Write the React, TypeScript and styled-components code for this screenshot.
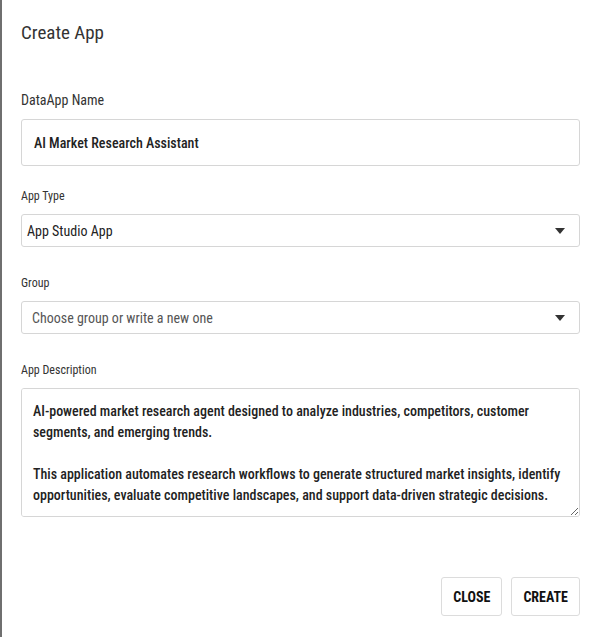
import styled, { createGlobalStyle } from "styled-components";

const GlobalStyle = createGlobalStyle`
  html, body {
    margin: 0;
    padding: 0;
    background: #ffffff;
  }
  * {
    box-sizing: border-box;
  }
`

const Dialog = styled.div`
  width: 600px;
  height: 637px;
  background: #ffffff;
  border-left: 2px solid #6f6f6f;
  padding: 0 20px 0 19px;
  display: flex;
  flex-direction: column;
  font-family: "Roboto Condensed", Roboto, "Liberation Sans", sans-serif;
  color: #2b2b2b;
`

const Title = styled.h2`
  margin: 21px 0 0;
  font-size: 19px;
  line-height: 24px;
  font-weight: 400;
  color: #333;
`

const Form = styled.div`
  display: flex;
  flex-direction: column;
`

const Field = styled.div<{ $top: number }>`
  display: flex;
  flex-direction: column;
  margin-top: ${({ $top }) => $top}px;
`

const Label = styled.label<{ $big?: boolean }>`
  font-size: ${({ $big }) => ($big ? 14 : 12)}px;
  line-height: ${({ $big }) => ($big ? 18 : 14)}px;
  margin-bottom: ${({ $big }) => ($big ? 10 : 11)}px;
  color: #333;
`

const TextBox = styled.div`
  height: 47px;
  border: 1px solid #d6d6d6;
  border-radius: 3px;
  display: flex;
  align-items: center;
  padding: 0 12px;
  font-size: 14px;
  font-weight: 500;
  color: #222;
`

const SelectBox = styled.div<{ $placeholder?: boolean }>`
  height: 33px;
  border: 1px solid #d6d6d6;
  border-radius: 3px;
  display: flex;
  align-items: center;
  justify-content: space-between;
  padding: 0 14px 0 ${({ $placeholder }) => ($placeholder ? 10 : 5)}px;
  font-size: 14px;
  color: ${({ $placeholder }) => ($placeholder ? "#555" : "#222")};
`

const Caret = styled.svg`
  width: 10px;
  height: 6px;
`

const Description = styled.textarea`
  height: 129px;
  border: 1px solid #d6d6d6;
  border-radius: 3px;
  padding: 12px 11px;
  font-family: inherit;
  font-size: 14px;
  font-weight: 500;
  line-height: 21px;
  color: #222;
  resize: vertical;
  outline: none;
`

const Footer = styled.div`
  margin-top: 60px;
  display: flex;
  justify-content: flex-end;
  gap: 9px;
`

const Button = styled.button`
  height: 39px;
  padding: 0 11px;
  background: #fff;
  border: 1px solid #dcdcdc;
  border-radius: 3px;
  font-family: inherit;
  font-size: 14px;
  font-weight: 700;
  color: #111;
  text-transform: uppercase;
  cursor: pointer;
`

const description = `AI-powered market research agent designed to analyze industries, competitors, customer segments, and emerging trends.

This application automates research workflows to generate structured market insights, identify opportunities, evaluate competitive landscapes, and support data-driven strategic decisions.`

function DownCaret() {
  return (
    <Caret viewBox="0 0 10 6">
      <path d="M0 0 L10 0 L5 6 Z" fill="#333" />
    </Caret>
  )
}

export default function App() {
  return (
    <>
      <GlobalStyle />
      <Dialog>
        <Title>Create App</Title>
        <Form>
          <Field $top={46}>
            <Label $big>DataApp Name</Label>
            <TextBox>AI Market Research Assistant</TextBox>
          </Field>
          <Field $top={23}>
            <Label>App Type</Label>
            <SelectBox>
              <span>App Studio App</span>
              <DownCaret />
            </SelectBox>
          </Field>
          <Field $top={29}>
            <Label>Group</Label>
            <SelectBox $placeholder>
              <span>Choose group or write a new one</span>
              <DownCaret />
            </SelectBox>
          </Field>
          <Field $top={29}>
            <Label>App Description</Label>
            <Description defaultValue={description} />
          </Field>
        </Form>
        <Footer>
          <Button>Close</Button>
          <Button>Create</Button>
        </Footer>
      </Dialog>
    </>
  );
}
